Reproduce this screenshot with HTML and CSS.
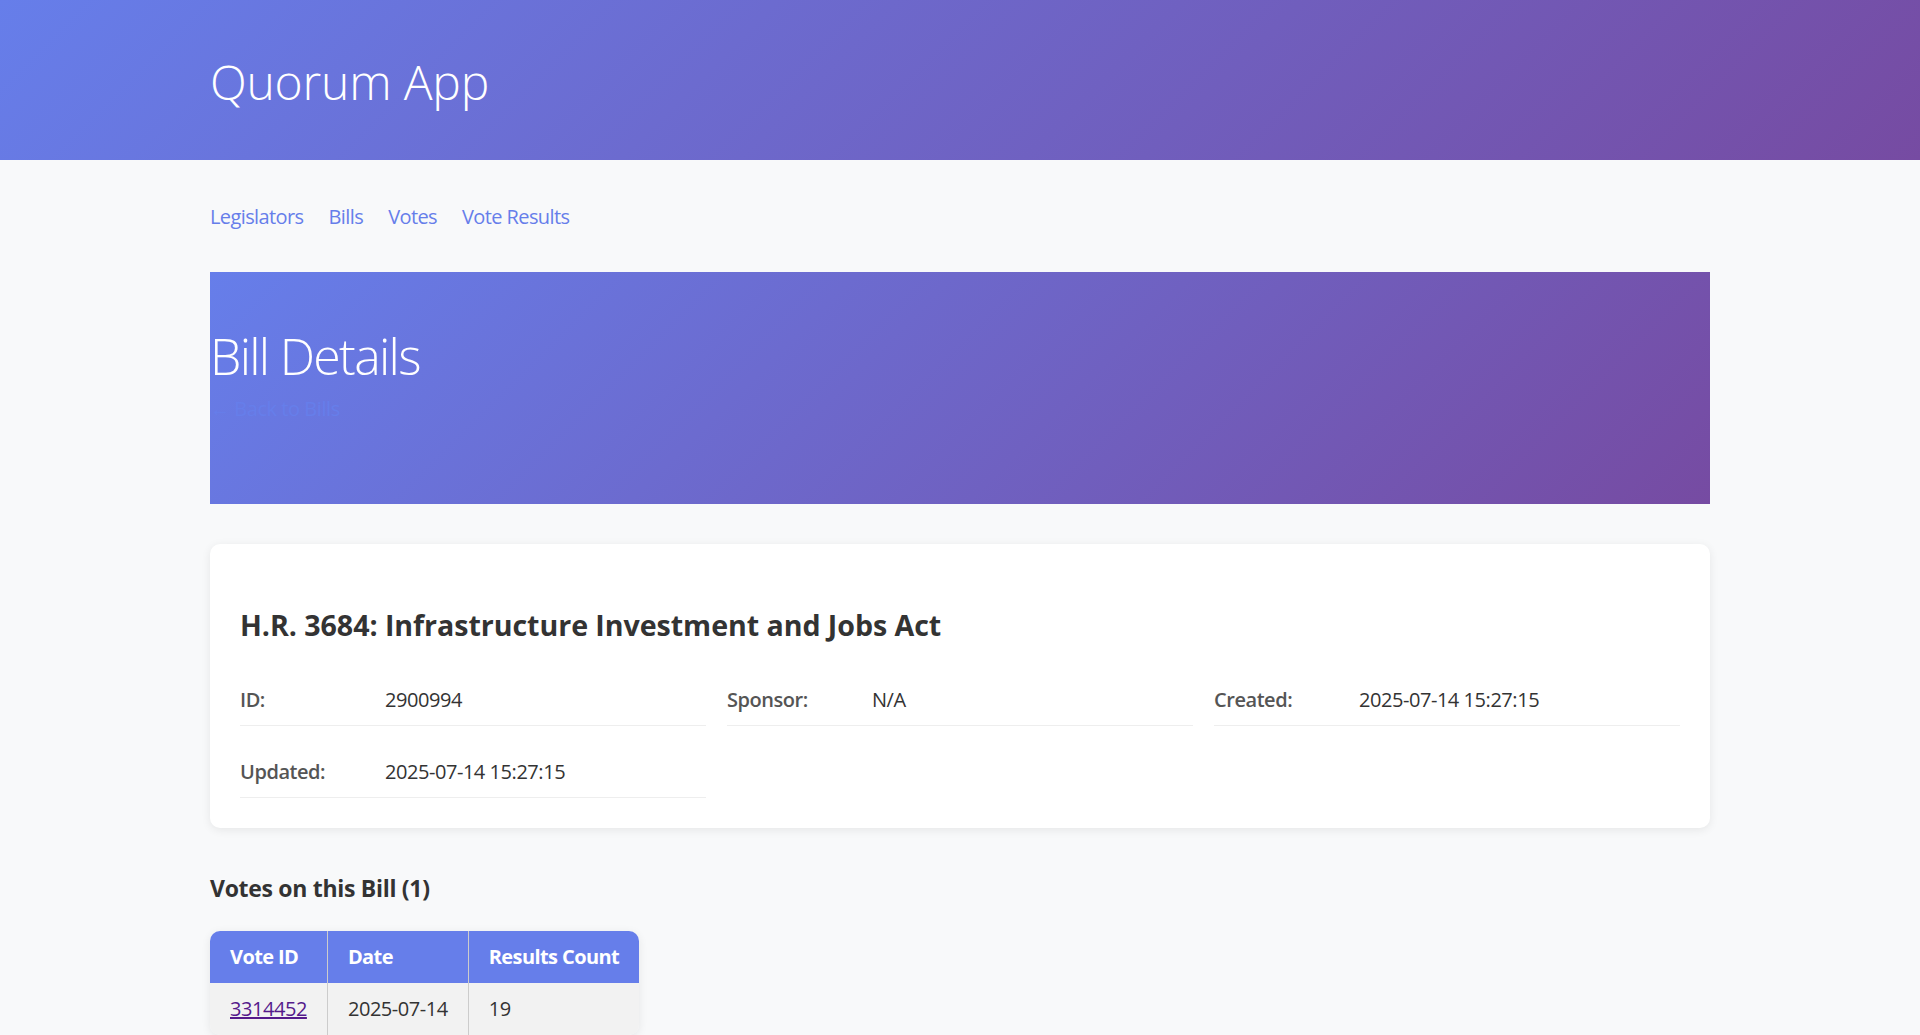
FILE: index.html
```html
<!DOCTYPE html>
<html lang="en">
<head>
<meta charset="utf-8">
<title>Quorum App - Bill Details</title>
<link rel="stylesheet" href="styles.css">
</head>
<body>
<header class="site-header">
  <div class="container">
    <h1 class="site-title">Quorum App</h1>
  </div>
</header>
<main class="container">
  <nav class="main-nav">
    <a href="#">Legislators</a>
    <a href="#">Bills</a>
    <a href="#">Votes</a>
    <a href="#">Vote Results</a>
  </nav>
  <section class="hero">
    <h2 class="hero-title">Bill Details</h2>
    <a class="back-link" href="#">← Back to Bills</a>
  </section>
  <section class="card">
    <h3 class="bill-title">H.R. 3684: Infrastructure Investment and Jobs Act</h3>
    <div class="details">
      <div class="detail"><span class="label">ID:</span><span class="value">2900994</span></div>
      <div class="detail"><span class="label">Sponsor:</span><span class="value">N/A</span></div>
      <div class="detail"><span class="label">Created:</span><span class="value">2025-07-14 15:27:15</span></div>
      <div class="detail"><span class="label">Updated:</span><span class="value">2025-07-14 15:27:15</span></div>
    </div>
  </section>
  <h3 class="section-title">Votes on this Bill (1)</h3>
  <table class="data-table">
    <thead>
      <tr><th>Vote ID</th><th>Date</th><th>Results Count</th></tr>
    </thead>
    <tbody>
      <tr><td><a class="visited" href="#">3314452</a></td><td>2025-07-14</td><td>19</td></tr>
    </tbody>
  </table>
</main>
</body>
</html>
```
FILE: styles.css
```css
* { box-sizing: border-box; }
html, body { margin: 0; padding: 0; }
body {
  background: #f8f9fa;
  color: #333;
  font-family: "Open Sans", "Noto Sans", sans-serif;
  font-size: 20px;
  line-height: 27px;
  letter-spacing: -0.45px;
}
.container {
  width: 1500px;
  margin: 0 auto;
}
.site-header {
  height: 160px;
  padding-top: 4px;
  background: linear-gradient(135deg, #667eea 0%, #764ba2 100%);
  color: #fff;
  display: flex;
  align-items: center;
}
.site-title {
  margin: 0;
  font-weight: 300;
  font-size: 48px;
  line-height: 56px;
  letter-spacing: -0.2px;
}
.main-nav {
  display: flex;
  gap: 25px;
  padding: 43px 0 0;
  height: 112px;
}
.main-nav a {
  color: #667eea;
  text-decoration: none;
  letter-spacing: -0.6px;
}
.hero {
  height: 232px;
  background: linear-gradient(135deg, #667eea 0%, #764ba2 100%);
  color: #fff;
  padding-top: 54px;
}
.hero-title {
  margin: 0;
  font-weight: 300;
  font-size: 50px;
  line-height: 60px;
  letter-spacing: -1.7px;
}
.back-link {
  display: inline-block;
  margin-top: 9px;
  color: #667eea;
  text-decoration: none;
}
.card {
  margin-top: 40px;
  background: #fff;
  border-radius: 10px;
  box-shadow: 0 2px 10px rgba(0,0,0,0.08);
  padding: 31px 30px 30px;
}
.bill-title {
  margin: 31px 0 30px;
  font-size: 28.6px;
  line-height: 38px;
  font-weight: 700;
  letter-spacing: -0.05px;
}
.details {
  display: grid;
  grid-template-columns: repeat(3, 1fr);
  column-gap: 21px;
  row-gap: 20px;
}
.detail {
  display: flex;
  padding: 12px 0;
  border-bottom: 1px solid #eee;
}
.label {
  width: 145px;
  flex: none;
  font-weight: 600;
  color: #555;
}
.value { color: #333; }
.section-title {
  margin: 45px 0 0;
  font-size: 23px;
  line-height: 30px;
  font-weight: 700;
  letter-spacing: -0.3px;
}
.data-table {
  margin-top: 28px;
  border-collapse: separate;
  border-spacing: 0;
  border-radius: 10px;
  overflow: hidden;
  box-shadow: 0 2px 10px rgba(0,0,0,0.08);
}
.data-table th, .data-table td {
  padding: 12px 20px 13px;
  text-align: left;
  border-right: 1px solid #ccc;
}
.data-table th:last-child, .data-table td:last-child { border-right: none; }
.data-table th {
  background: #667eea;
  color: #fff;
  font-weight: 700;
  letter-spacing: -0.6px;
}
.data-table td {
  background: #f2f2f2;
  color: #333;
}
.visited { color: #551a8b; }
```
